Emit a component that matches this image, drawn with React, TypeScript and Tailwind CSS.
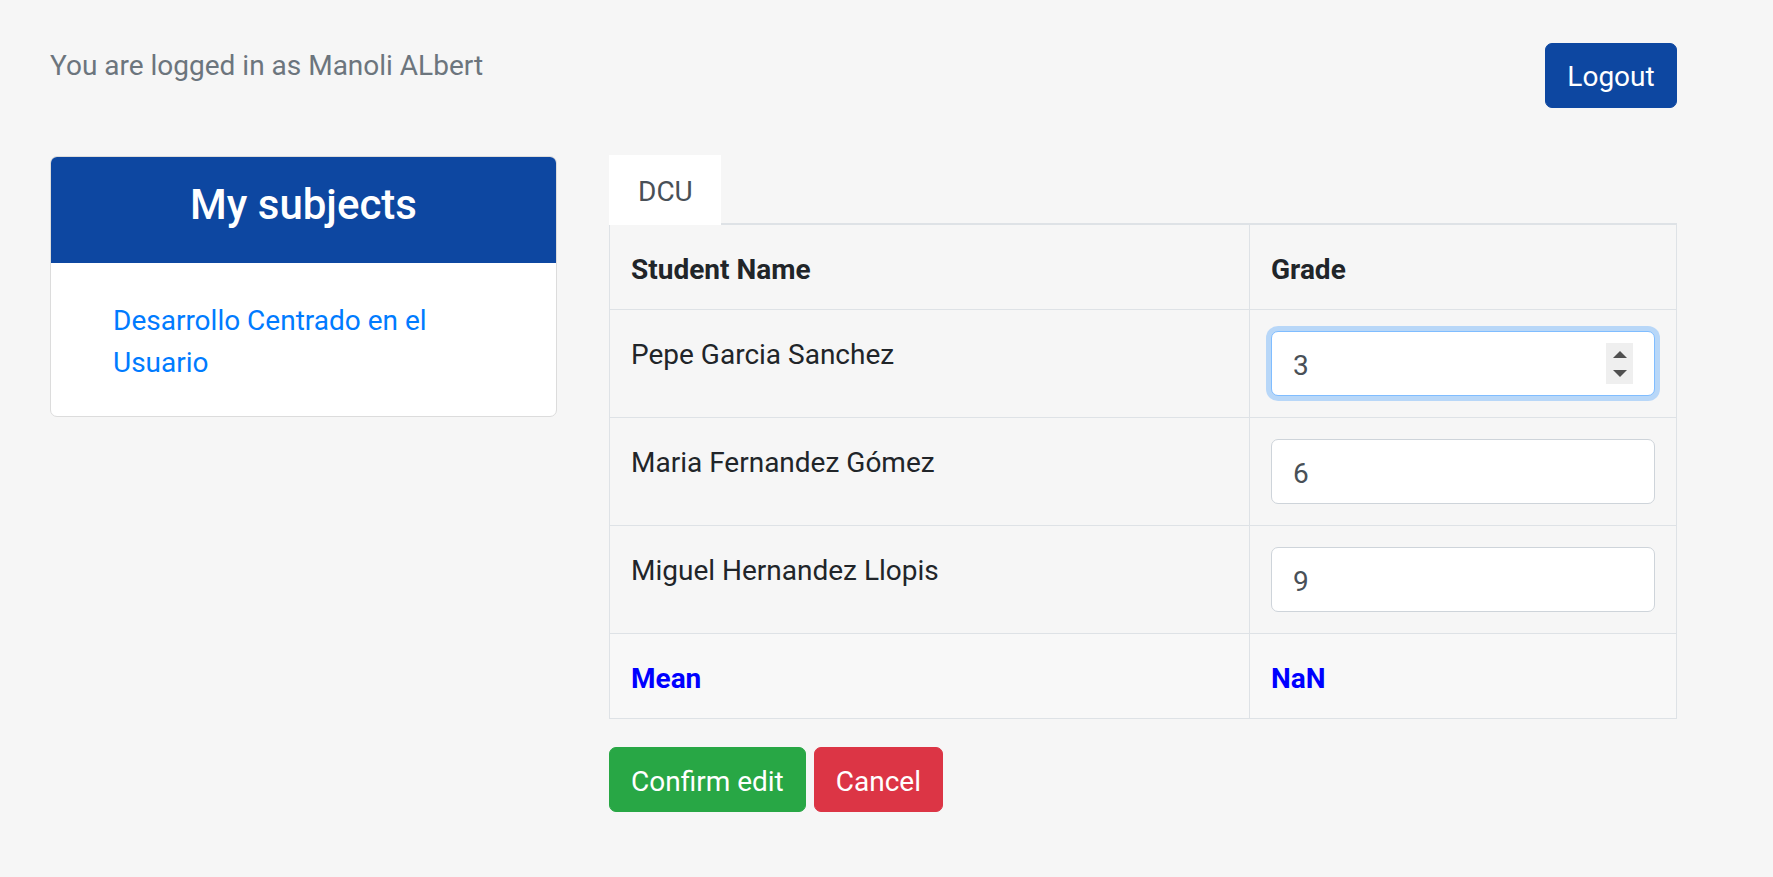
import React from "react";

const font = { fontFamily: "Roboto, 'Liberation Sans', Arial, sans-serif" };

function GradeInput({ value, focused }: { value: string; focused?: boolean }) {
  return (
    <div className="relative w-full">
      <input
        type="text"
        defaultValue={value}
        className={
          "block w-full h-[65px] rounded-[7px] bg-white px-[21px] pt-[4px] text-[28px] leading-[42px] text-[#495057] outline-none " +
          (focused
            ? "border border-[#80bdff] shadow-[0_0_0_5px_rgba(0,123,255,0.25)]"
            : "border border-[#ced4da]")
        }
        style={font}
      />
      {focused && (
        <div className="absolute right-[22px] top-[12px] w-[27px] h-[41px] bg-[#efefef] flex flex-col items-center justify-center gap-[12px]">
          <svg width="14" height="7" viewBox="0 0 14 7">
            <polygon points="7,0 14,7 0,7" fill="#505050" />
          </svg>
          <svg width="14" height="7" viewBox="0 0 14 7">
            <polygon points="0,0 14,0 7,7" fill="#505050" />
          </svg>
        </div>
      )}
    </div>
  );
}

export default function App() {
  const students = [
    { name: "Pepe Garcia Sanchez", grade: "3", focused: true },
    { name: "Maria Fernandez Gómez", grade: "6" },
    { name: "Miguel Hernandez Llopis", grade: "9" },
  ];
  return (
    <div className="min-h-[877px] w-full bg-[#f6f6f6] pl-[50px] pt-[43px]" style={font}>
      {/* Top bar */}
      <div className="flex w-[1627px] items-start justify-between">
        <p className="mt-[2px] text-[28px] leading-[42px] text-[#6c757d]">You are logged in as Manoli ALbert</p>
        <button className="h-[65px] w-[132px] rounded-[7px] border border-[#0d47a1] bg-[#0d47a1] pt-[2px] text-[28px] leading-[42px] text-white">
          Logout
        </button>
      </div>

      {/* Main */}
      <div className="mt-[47px] flex items-start">
        {/* Left card */}
        <div className="mt-px w-[507px] overflow-hidden rounded-[7px] border border-[#dcdcdc] bg-white">
          <div className="-mx-px -mt-px bg-[#0d47a1] pt-[24px] pb-[33px] text-center">
            <h4 className="text-[42px] leading-[50px] font-medium text-white">My subjects</h4>
          </div>
          <div className="pt-[37px] pb-[32px] pl-[62px]">
            <a href="#" className="block w-[370px] text-[28px] leading-[42px] text-[#007bff]">
              Desarrollo Centrado en el Usuario
            </a>
          </div>
        </div>

        {/* Right column */}
        <div className="ml-[52px] w-[1068px]">
          <div className="flex h-[70px] border-b-2 border-[#dee2e6]">
            <div className="h-[70px] w-[112px] bg-white pl-[29px] pt-[16px] text-[28px] leading-[42px] text-[#495057]">
              DCU
            </div>
          </div>

          <div className="border-x border-b border-[#dee2e6]">
            {/* header */}
            <div className="flex h-[85px] border-b border-[#dee2e6]">
              <div className="w-[640px] border-r border-[#dee2e6] pl-[21px] pt-[24px] text-[28px] leading-[42px] font-bold text-[#212529]">
                Student Name
              </div>
              <div className="flex-1 pl-[21px] pt-[24px] text-[28px] leading-[42px] font-bold text-[#212529]">
                Grade
              </div>
            </div>

            {students.map((s) => (
              <div key={s.name} className="flex h-[108px] border-b border-[#dee2e6]">
                <div className="w-[640px] border-r border-[#dee2e6] pl-[21px] pt-[24px] text-[28px] leading-[42px] text-[#212529]">
                  {s.name}
                </div>
                <div className="flex-1 px-[21px] pt-[21px]">
                  <GradeInput value={s.grade} focused={s.focused} />
                </div>
              </div>
            ))}

            {/* mean */}
            <div className="flex h-[84px] bg-[#f8f8f8]">
              <div className="w-[640px] border-r border-[#dee2e6] pl-[21px] pt-[24px] text-[28px] leading-[42px] font-bold text-[#0000ff]">
                Mean
              </div>
              <div className="flex-1 pl-[21px] pt-[24px] text-[28px] leading-[42px] font-bold text-[#0000ff]">
                NaN
              </div>
            </div>
          </div>

          <div className="mt-[28px] flex gap-2">
            <button className="h-[65px] rounded-[7px] border border-[#28a745] bg-[#28a745] px-[21px] pt-[4px] text-[28px] leading-[42px] text-white">
              Confirm edit
            </button>
            <button className="h-[65px] rounded-[7px] border border-[#dc3545] bg-[#dc3545] px-[21px] pt-[4px] text-[28px] leading-[42px] text-white">
              Cancel
            </button>
          </div>
        </div>
      </div>
    </div>
  );
}
